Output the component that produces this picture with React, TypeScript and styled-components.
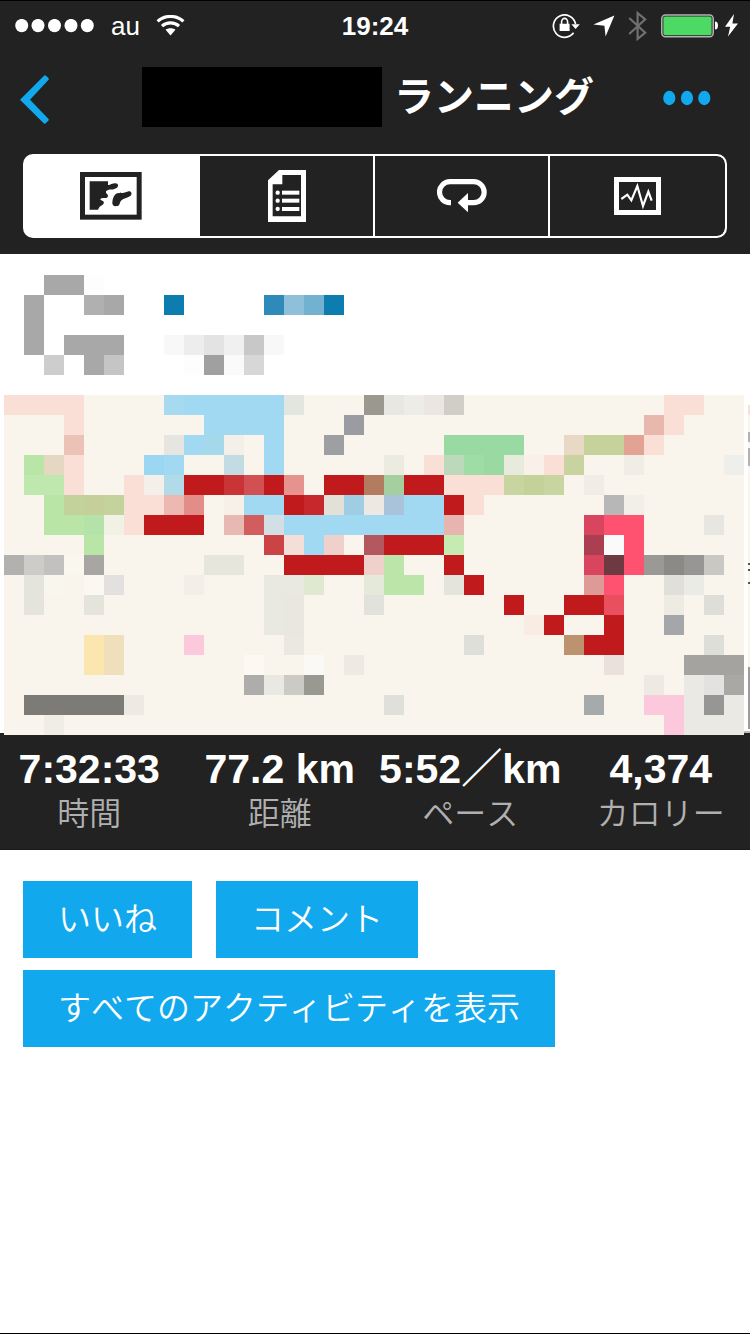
import React from 'react';
import styled, { createGlobalStyle } from 'styled-components';

const GlobalStyle = createGlobalStyle`
  *, *::before, *::after { box-sizing: border-box; }
  body {
    margin: 0;
    background: #fff;
    font-family: "Liberation Sans", "Noto Sans CJK JP", sans-serif;
    font-kerning: none;
  }
  button { font: inherit; font-kerning: none; border: 0; border-radius: 0; padding: 0; background: none; cursor: pointer; }
  svg { display: block; }
`;

const DARK = '#222222';
const BLUE = '#11a8ee';

const Page = styled.div`
  display: flex;
  flex-direction: column;
  min-height: 100vh;
  overflow-x: hidden;
  border-top: 1px solid #000;
  border-bottom: 1px solid #000;
`;

const TopBar = styled.header`
  background: ${DARK};
  padding-bottom: 16px;
`;

const StatusBar = styled.div`
  display: grid;
  grid-template-columns: 1fr auto 1fr;
  align-items: center;
  height: 49px;
  padding: 0 11px;
  color: #fff;
  font-size: 26px;
  line-height: 30px;
`;

const StatusGroup = styled.div<{ $end?: boolean; $gap: number }>`
  display: flex;
  align-items: center;
  justify-content: ${(p) => (p.$end ? 'flex-end' : 'flex-start')};
  gap: ${(p) => p.$gap}px;
  padding-left: 4px;
`;

const Clock = styled.time`
  font-weight: 700;
`;

const NavBar = styled.nav`
  display: grid;
  grid-template-columns: 78px 1fr 92px;
  align-items: center;
  height: 94px;
  margin-bottom: 10px;
`;

const NavButton = styled.button`
  display: flex;
  align-items: center;
  height: 80px;
  width: 100%;
`;

const BackButton = styled(NavButton)`
  padding: 4px 0 0 20px;
`;

const MoreButton = styled(NavButton)`
  padding: 2px 0 0 5px;
`;

const Title = styled.h1`
  display: flex;
  align-items: center;
  justify-content: center;
  gap: 12px;
  margin: 0;
  color: #fff;
  font-size: 40px;
  line-height: 60px;
  font-weight: 700;
  white-space: nowrap;
`;

const HiddenName = styled.span`
  width: 240px;
  height: 60px;
  background: #000;
`;

const Tabs = styled.div`
  display: grid;
  grid-template-columns: repeat(4, 1fr);
  height: 84px;
  margin: 0 23px;
  border: 2px solid #fff;
  border-radius: 10px;
  background: #fff;
  overflow: hidden;
`;

const Tab = styled.button<{ $active?: boolean }>`
  display: flex;
  align-items: center;
  justify-content: center;
  background: ${(p) => (p.$active ? '#fff' : DARK)};
  color: ${(p) => (p.$active ? DARK : '#fff')};
  border-right: 2px solid #fff;

  &:first-child { padding-right: 2px; }
  &:last-child { border-right: 0; border-radius: 0 8px 8px 0; }
`;

const Profile = styled.section`
  padding: 21px 24px 20px;
`;

const MapFigure = styled.figure`
  margin: 0;

  svg { width: 100%; height: auto; }
`;

const StatsBar = styled.section`
  margin: 0 -6px;
`;

const Stats = styled.dl`
  display: grid;
  grid-template-columns: repeat(4, 1fr);
  margin: 0;
  padding: 10px 0 13px;
  background: ${DARK};
  border-bottom: 1px solid #1a1a1a;
`;

const Stat = styled.div`
  display: flex;
  flex-direction: column-reverse;
  align-items: center;
  white-space: nowrap;
`;

const StatLabel = styled.dt`
  color: #b0b0b0;
  font-size: 32px;
  line-height: 43px;
  font-weight: 350;
`;

const StatValue = styled.dd`
  margin: 0;
  color: #fff;
  font-size: 41px;
  line-height: 48px;
  font-weight: 700;
`;

const Actions = styled.section`
  display: flex;
  flex-wrap: wrap;
  gap: 12px 24px;
  padding: 31px 23px;
`;

const ActionButton = styled.button`
  height: 77px;
  padding: 0 35px;
  background: ${BLUE};
  color: #fff;
  font-size: 33px;
  line-height: 48px;
  font-weight: 350;
  white-space: nowrap;
`;

/* A run of equally coloured cells: [first column, number of cells, colour] */
type Run = [number, number, string];

const CELL = 20;

function Mosaic({ rows }: { rows: Run[][] }) {
  return (
    <g shapeRendering="crispEdges">
      {rows.map((runs, r) =>
        runs.map(([col, count, fill]) => (
          <rect key={`${r}-${col}`} x={col * CELL} y={r * CELL} width={count * CELL} height={CELL} fill={fill} />
        )),
      )}
    </g>
  );
}

const G = '#a8a8a8';
const profileRows: Run[][] = [
  [[1, 2, G], [3, 1, '#fdfdfd']],
  [[0, 1, G], [3, 1, '#b0b0b0'], [4, 1, G], [7, 1, '#0d7cae'], [12, 1, '#2d8ab9'], [13, 1, '#8fc0d9'], [14, 1, '#73b1d0'], [15, 1, '#0d7cae']],
  [[0, 1, G]],
  [[0, 1, G], [2, 3, G], [7, 1, '#f8f8f8'], [8, 1, '#ededed'], [9, 1, '#e3e3e3'], [10, 1, '#f0f0f0'], [11, 1, '#c8c8c8'], [12, 1, '#f8f8f8']],
  [[1, 1, '#cdcdcd'], [3, 1, G], [4, 1, '#c5c5c5'], [8, 1, '#fdfdfd'], [9, 1, '#a0a0a0'], [10, 1, '#fafafa'], [11, 1, '#d7d7d7']],
];

const ROAD = '#f9dfd6';
const WATER = '#a0d9f1';
const ROUTE = '#c01a1d';
const PARK = '#b9e5a6';
const PIN = '#ff5271';
const FOG = '#e9e9e1';
const PALE = '#e4e4dc';
const PINK = '#fbc8dc';

const mapRows: Run[][] = [
  [[0, 4, ROAD], [8, 1, '#a6daee'], [9, 5, WATER], [14, 1, '#e3e5e1'], [18, 1, '#9b988f'], [19, 1, '#e8e7e1'], [20, 1, '#edece6'], [21, 1, '#ebe6e1'], [22, 1, '#d1cec7'], [33, 2, ROAD]],
  [[3, 1, ROAD], [10, 4, WATER], [17, 1, '#9a9ca1'], [32, 1, '#e8b7ae'], [33, 1, ROAD]],
  [[3, 1, '#ecc2b7'], [8, 1, '#e6e5df'], [9, 1, WATER], [10, 1, '#a6d8ec'], [11, 1, '#f5efe9'], [13, 1, WATER], [16, 1, '#9d9fa3'], [22, 4, '#99daa2'], [28, 1, '#e8d8c4'], [29, 2, '#c5d29a'], [31, 1, '#e2a294'], [32, 1, ROAD]],
  [[1, 1, PARK], [2, 1, '#e5d8c3'], [3, 1, ROAD], [7, 1, '#9bd6f2'], [8, 1, WATER], [11, 1, '#c3dce3'], [13, 1, WATER], [19, 1, '#ebecdf'], [21, 1, ROAD], [22, 1, '#bdd9bc'], [23, 1, '#9edda5'], [24, 1, '#9adaa2'], [25, 1, '#e6ebdb'], [26, 1, '#faf0ea'], [27, 1, ROAD], [28, 1, '#c9d3a1'], [31, 1, '#f0ede7'], [36, 1, '#eeeeea']],
  [[1, 2, '#bfe8ae'], [3, 1, ROAD], [6, 1, ROAD], [7, 1, '#f5efe9'], [8, 1, '#b1dbe8'], [9, 2, ROUTE], [11, 1, '#c93436'], [12, 1, '#d15052'], [13, 1, ROUTE], [14, 1, '#e6928e'], [16, 2, ROUTE], [18, 1, '#b37c60'], [19, 1, '#a5cf9e'], [20, 2, ROUTE], [22, 3, ROAD], [25, 1, '#c9d5a1'], [26, 1, '#c4d198'], [27, 1, '#c9d5a1'], [29, 1, '#f0ede6']],
  [[2, 1, PARK], [3, 1, '#c3d29a'], [4, 1, '#c5cf98'], [5, 1, '#c3d39b'], [6, 2, ROAD], [8, 1, '#ecb8b1'], [9, 1, '#e28d88'], [11, 1, '#f6f0e9'], [12, 2, WATER], [14, 1, ROUTE], [15, 1, '#c6282b'], [16, 1, '#e3e0d8'], [17, 1, '#9fcde4'], [18, 1, '#ede8e1'], [19, 1, '#a9c4da'], [20, 2, WATER], [22, 1, ROUTE], [23, 1, ROAD], [30, 1, '#b7b7b8'], [31, 1, '#f2efe8']],
  [[2, 2, PARK], [4, 1, '#b5e2a8'], [5, 1, '#f1f1e4'], [6, 1, ROAD], [7, 3, ROUTE], [11, 1, '#e8b9b3'], [12, 1, '#d25d5e'], [13, 1, '#d2dfe4'], [14, 8, WATER], [22, 1, '#e7b4af'], [29, 1, '#d9455f'], [30, 2, PIN], [35, 1, '#e7e6e0']],
  [[4, 1, PARK], [13, 1, '#cc4346'], [14, 1, '#f3dfd8'], [15, 1, WATER], [16, 1, '#efd1cc'], [18, 1, '#b45860'], [19, 3, ROUTE], [22, 1, '#c5eab2'], [29, 1, '#ab3e51'], [30, 1, '#fafafa'], [31, 1, PIN]],
  [[0, 1, '#b2b1af'], [1, 1, '#cdccc9'], [2, 1, '#c2c1bf'], [3, 1, '#faf7ee'], [4, 1, '#a8a6a2'], [10, 2, '#e6e6dd'], [14, 4, ROUTE], [18, 1, '#efd0cb'], [19, 1, '#bce5aa'], [22, 1, ROUTE], [29, 1, '#d9455f'], [30, 1, '#6e3a42'], [31, 1, PIN], [32, 1, '#9a9996'], [33, 1, '#8b8a86'], [34, 1, '#979694'], [35, 1, '#c9c8c4']],
  [[1, 1, PALE], [2, 1, '#f9f6ed'], [4, 1, '#faf8f0'], [5, 1, '#e2e1df'], [9, 1, '#f2efe8'], [13, 2, FOG], [15, 1, '#dfe9d0'], [18, 1, '#e5e9d9'], [19, 2, '#bce6a9'], [22, 1, PALE], [23, 1, ROUTE], [29, 1, '#de9a97'], [30, 1, PIN], [33, 1, '#e0dfda'], [34, 1, '#ebebe6']],
  [[1, 1, PALE], [4, 1, PALE], [13, 1, FOG], [14, 1, '#eae7e0'], [18, 1, '#e2e2dc'], [25, 1, ROUTE], [28, 2, ROUTE], [30, 1, '#e9505f'], [33, 1, '#eeebe3'], [35, 1, '#ddded7']],
  [[13, 1, FOG], [14, 1, '#eae7e0'], [26, 1, '#f8ece3'], [27, 1, ROUTE], [30, 1, ROUTE], [33, 1, '#a5a6aa']],
  [[4, 1, '#fae6ae'], [5, 1, '#efdfba'], [9, 1, PINK], [14, 1, '#ebe8e1'], [23, 1, '#dfdfd9'], [28, 1, '#bd926e'], [29, 2, ROUTE], [35, 1, '#ddded7']],
  [[4, 1, '#fae6ae'], [5, 1, '#efdfba'], [12, 1, '#fcf9f3'], [15, 1, '#faf9f5'], [17, 1, '#eee9e3'], [30, 1, '#ebe1dc'], [34, 3, '#a4a3a0']],
  [[12, 1, '#aeadab'], [13, 1, '#e9e8e3'], [14, 1, '#cbcac5'], [15, 1, '#999992'], [32, 1, '#edeae3'], [34, 1, '#eae9e3'], [35, 1, '#e3e2e1'], [36, 1, '#a9a8a5']],
  [[1, 5, '#7d7b76'], [6, 1, '#edeae3'], [19, 1, '#dfe0da'], [29, 1, '#a6aaab'], [32, 2, PINK], [34, 1, '#eae9e3'], [35, 1, '#969694'], [36, 1, '#eae9e3']],
  [[2, 1, '#f0ede5'], [33, 1, PINK], [34, 3, '#eae9e3']],
];

const SignalDots = () => (
  <svg width="80" height="14" viewBox="0 0 80 14" fill="#fff" aria-hidden="true">
    {[6.7, 23, 39.5, 56, 72.3].map((x) => (
      <ellipse key={x} cx={x} cy="6.6" rx="6.5" ry="6.7" />
    ))}
  </svg>
);

const WifiIcon = () => (
  <svg width="29" height="22" viewBox="0 0 29 22" aria-hidden="true">
    <g fill="none" stroke="#fff" strokeWidth="3.2">
      <path d="M1.6 6.4 C8.5 -0.2 20.5 -0.2 27.4 6.4" />
      <path d="M6 11.2 C10.6 6.8 18.4 6.8 23 11.2" />
    </g>
    <path d="M9.6 14.8 C12 12.8 17 12.8 19.4 14.8 L14.5 20.6 Z" fill="#fff" />
  </svg>
);

const RotationLockIcon = () => (
  <svg width="28" height="26" viewBox="0 0 28 26" aria-hidden="true">
    <g fill="none" stroke="#fff">
      <path d="M21.6 19.8 A11.2 11.2 0 1 1 23.6 11" strokeWidth="1.7" />
      <path d="M9.6 11.4 V9 a3 3.6 0 0 1 6 0 V11.4" strokeWidth="1.6" />
    </g>
    <path d="M7.6 10.8 H17.6 V18 H7.6 Z M19.4 11.2 H27.8 L23.6 16 Z" fill="#fff" />
  </svg>
);

const LocationIcon = () => (
  <svg width="22" height="22" viewBox="0 0 22 22" fill="#fff" aria-hidden="true">
    <path d="M21.4 0.4 L12.6 21.4 L11.4 10.8 L0.4 9.6 Z" />
  </svg>
);

const BluetoothIcon = () => (
  <svg width="20" height="32" viewBox="0 0 20 32" fill="none" stroke="#707070" strokeWidth="2.2" aria-hidden="true">
    <path d="M1.2 8 L17.2 22.6 L9.6 29 V3 L17.2 9.4 L1.2 24" />
  </svg>
);

const BatteryIcon = () => (
  <svg width="78" height="24" viewBox="0 0 78 24" aria-hidden="true">
    <rect x="0.8" y="0.9" width="51.4" height="21.8" rx="3.6" fill="none" stroke="#b4b4b4" strokeWidth="1.5" />
    <rect x="2.4" y="2.4" width="48.2" height="18.8" rx="1.8" fill="#4cd964" />
    <path d="M54 7.6 Q57 7.8 57 11.6 Q57 15.4 54 15.6 Z" fill="#fff" />
    <path d="M73 0 L64 12.8 H69.2 L67 22.6 L77 9.6 H71.4 Z" fill="#fff" />
  </svg>
);

const BackIcon = () => (
  <svg width="29" height="49" viewBox="0 0 87 147" fill={BLUE} aria-hidden="true">
    <path d="M0 74 L72 2 Q75 -1 78 2 L85 9 Q88 12 85 15 L30 74 L85 131 Q88 134 85 137 L77 145 Q74 148 71 145 Z" />
  </svg>
);

const MoreIcon = () => (
  <svg width="48" height="16" viewBox="0 0 48 16" fill={BLUE} aria-hidden="true">
    {[6.3, 24, 41.3].map((x) => (
      <ellipse key={x} cx={x} cy="8" rx="6.1" ry="7.2" />
    ))}
  </svg>
);

const MapIcon = () => (
  <svg width="62" height="48" viewBox="0 0 186 144" fill="currentColor" aria-hidden="true">
    <rect x="7.5" y="7.5" width="170" height="128" fill="none" stroke="currentColor" strokeWidth="15" />
    <path d="M29 28 H84 V39 C90 40 96 34 106 34 C116 34 117 45 108 49 C99 55 90 51 84 54 C77 57 76 60 80 65 C88 70 83 79 74 78 C66 78 59 79 62 84 C73 87 75 94 66 100 C57 104 58 107 54 113 H29 Z" />
    <path d="M146 58 C154 57 158 66 151 72 C142 78 129 80 123 86 C118 92 120 101 112 102 C101 104 96 100 97 90 C98 78 103 68 111 64 C123 63 134 64 146 58 Z" />
  </svg>
);

const DetailsIcon = () => (
  <svg width="38" height="52" viewBox="0 0 114 156" fill="currentColor" aria-hidden="true">
    <path fillRule="evenodd" d="M33 0 H114 V156 H0 V31 Z M43 15 V43 H14 V139 H99 V15 Z" />
    {[68, 92, 117].map((y) => (
      <g key={y}>
        <circle cx="29" cy={y} r="6.5" />
        <rect x="42" y={y - 6} width="52" height="12" />
      </g>
    ))}
  </svg>
);

const LapsIcon = () => (
  <svg width="50" height="34" viewBox="0 0 150 102" aria-hidden="true">
    <path d="M42 71 H39 A31.5 31.5 0 0 1 39 8 H110 A31.5 31.5 0 0 1 110 71 H86" fill="none" stroke="currentColor" strokeWidth="15.5" />
    <path d="M62 71 L93 42 V100 Z" fill="currentColor" />
  </svg>
);

const ChartIcon = () => (
  <svg width="47" height="38" viewBox="0 0 141 114" fill="none" stroke="currentColor" aria-hidden="true">
    <rect x="7.5" y="7.5" width="126" height="99" strokeWidth="15" />
    <path d="M22 66 L40 53 L52 70 L70 27 L87 87 L103 44 L113 71" strokeWidth="6.5" />
  </svg>
);

const tabs = [
  { label: '地図', Icon: MapIcon },
  { label: '詳細', Icon: DetailsIcon },
  { label: 'ラップ', Icon: LapsIcon },
  { label: 'グラフ', Icon: ChartIcon },
];

const stats = [
  { label: '時間', value: '7:32:33' },
  { label: '距離', value: '77.2 km' },
  { label: 'ペース', value: '5:52／km' },
  { label: 'カロリー', value: '4,374' },
];

const actions = ['いいね', 'コメント', 'すべてのアクティビティを表示'];

export default function App() {
  return (
    <Page lang="ja">
      <GlobalStyle />
      <TopBar>
        <StatusBar>
          <StatusGroup $gap={16}>
            <SignalDots />
            <span>au</span>
            <WifiIcon />
          </StatusGroup>
          <Clock>19:24</Clock>
          <StatusGroup $gap={13} $end>
            <RotationLockIcon />
            <LocationIcon />
            <BluetoothIcon />
            <BatteryIcon />
          </StatusGroup>
        </StatusBar>
        <NavBar>
          <BackButton aria-label="戻る"><BackIcon /></BackButton>
          <Title>
            <HiddenName />
            ランニング
          </Title>
          <MoreButton aria-label="その他"><MoreIcon /></MoreButton>
        </NavBar>
        <Tabs role="tablist">
          {tabs.map(({ label, Icon }, i) => (
            <Tab key={label} role="tab" aria-label={label} aria-selected={i === 0} $active={i === 0}>
              <Icon />
            </Tab>
          ))}
        </Tabs>
      </TopBar>
      <main>
        <Profile>
          <svg width="320" height="100" viewBox="0 0 320 100" aria-hidden="true">
            <Mosaic rows={profileRows} />
          </svg>
        </Profile>
        <MapFigure>
          <svg viewBox="0 0 750 340" role="img" aria-label="ルートマップ">
            <rect y="338" width="750" height="2" fill={DARK} />
            <g shapeRendering="crispEdges">
              <rect x="748" y="10" width="2" height="10" fill={ROAD} />
              <rect x="748" y="20" width="2" height="252" fill="#f9f5ea" />
              <path d="M748 37 h2 v10 h-2 Z M748 53 h2 v18 h-2 Z" fill="#b5b3ae" />
              <path d="M748 168 h2 v2 h-2 Z M748 174 h2 v2 h-2 Z M748 187 h2 v2 h-2 Z" fill="#55544f" />
              <rect x="748" y="272" width="2" height="62" fill="#9c9c9c" />
              <rect x="744" y="336" width="6" height="2" fill="#bdbdbd" />
            </g>
            <g transform="translate(4 0)">
              <rect width="740" height="340" fill="#f9f4ec" />
              <Mosaic rows={mapRows} />
            </g>
          </svg>
        </MapFigure>
        <StatsBar>
          <Stats>
            {stats.map(({ label, value }) => (
              <Stat key={label}>
                <StatLabel>{label}</StatLabel>
                <StatValue>{value}</StatValue>
              </Stat>
            ))}
          </Stats>
        </StatsBar>
        <Actions>
          {actions.map((label) => (
            <ActionButton key={label}>{label}</ActionButton>
          ))}
        </Actions>
      </main>
    </Page>
  );
}
